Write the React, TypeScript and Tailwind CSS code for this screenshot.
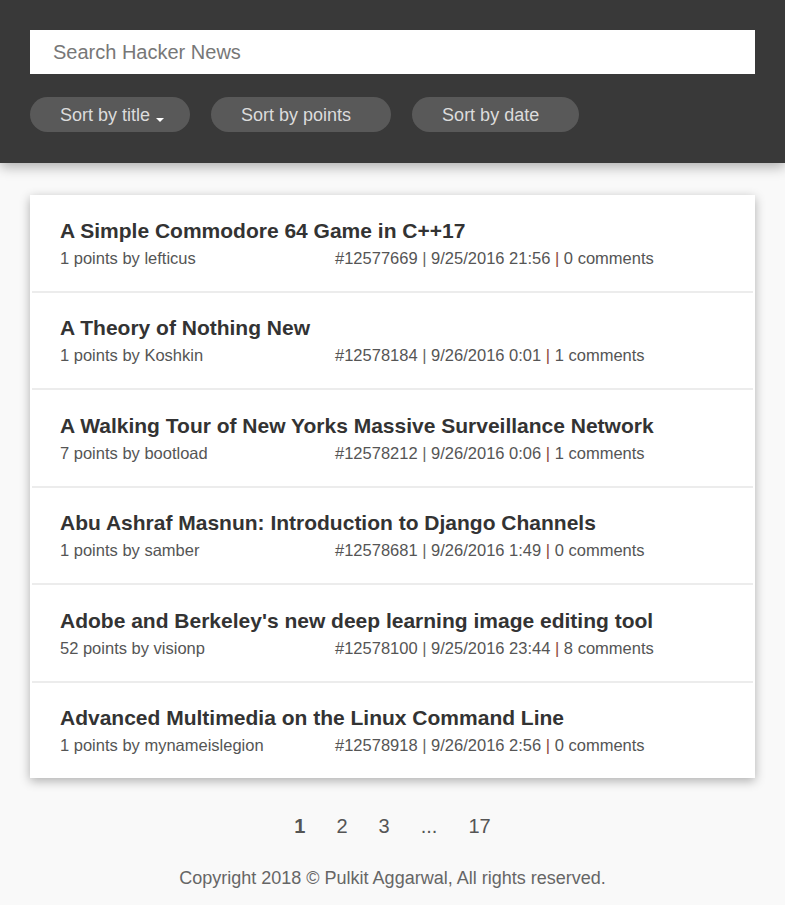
import React from 'react'

const stories = [
    { title: 'A Simple Commodore 64 Game in C++17', points: 1, author: 'lefticus', id: 12577669, date: '9/25/2016 21:56', comments: 0 },
    { title: 'A Theory of Nothing New', points: 1, author: 'Koshkin', id: 12578184, date: '9/26/2016 0:01', comments: 1 },
    { title: 'A Walking Tour of New Yorks Massive Surveillance Network', points: 7, author: 'bootload', id: 12578212, date: '9/26/2016 0:06', comments: 1 },
    { title: 'Abu Ashraf Masnun: Introduction to Django Channels', points: 1, author: 'samber', id: 12578681, date: '9/26/2016 1:49', comments: 0 },
    { title: "Adobe and Berkeley's new deep learning image editing tool", points: 52, author: 'visionp', id: 12578100, date: '9/25/2016 23:44', comments: 8 },
    { title: 'Advanced Multimedia on the Linux Command Line', points: 1, author: 'mynameislegion', id: 12578918, date: '9/26/2016 2:56', comments: 0 },
]

function SortButton({ label, active }: { label: string, active?: boolean }) {
    return (
        <button className="h-[35px] rounded-full bg-[#595959] pl-[30px] pr-[26px] pt-[1px] text-[18px] text-[#dcdcdc] flex items-center">
            {label}
            <span className={`${active ? 'border-t-white' : 'border-t-transparent'} ml-[6px] mt-[10px] inline-block w-0 h-0 border-l-[4px] border-r-[4px] border-t-[4px] border-l-transparent border-r-transparent`} />
        </button>
    )
}

function Story({ s, last }: { s: typeof stories[0], last: boolean }) {
    return (
        <div className={`${last ? '' : 'border-b-2 border-[#ececec]'} mx-[2px] pl-[28px] pt-[22.5px] pb-[23px]`}>
            <div className="text-[21px] leading-[25px] font-bold text-[#333]">{s.title}</div>
            <div className="flex mt-[5px] text-[16.5px] leading-[20px] text-[#555]">
                <div className="w-[275px]">{s.points} points by {s.author}</div>
                <div>
                    #{s.id} <span className="text-[#666]">|</span> {s.date} <span className="text-[#8e4a3a]">|</span> {s.comments} comments
                </div>
            </div>
        </div>
    )
}

export default function App() {
    return (
        <div className="min-h-screen bg-[#f9f9f9]" style={{ fontFamily: '"Liberation Sans", Arial, sans-serif' }}>
            <header className="bg-[#393939] px-[30px] pt-[30px] pb-[31px] shadow-[0_4px_12px_rgba(0,0,0,0.3)]">
                <input
                    className="w-full h-[44px] bg-white px-[23px] text-[20px] text-[#333] placeholder:text-[#777] outline-none"
                    placeholder="Search Hacker News"
                />
                <div className="flex gap-[21px] mt-[23px]">
                    <SortButton label="Sort by title" active />
                    <SortButton label="Sort by points" />
                    <SortButton label="Sort by date" />
                </div>
            </header>
            <main className="px-[30px] pt-[32px]">
                <div className="bg-white shadow-[0_3px_10px_rgba(0,0,0,0.3)]">
                    {stories.map((s, i) => <Story key={s.id} s={s} last={i === stories.length - 1} />)}
                </div>
                <div className="flex justify-center items-center gap-[31px] mt-[33px] text-[20px] text-[#555]">
                    <span className="font-bold">1</span>
                    <span>2</span>
                    <span>3</span>
                    <span>...</span>
                    <span>17</span>
                </div>
                <footer className="text-center text-[18px] text-[#666] mt-[24px] pb-[16px]">
                    Copyright 2018 © Pulkit Aggarwal, All rights reserved.
                </footer>
            </main>
        </div>
    )
}
